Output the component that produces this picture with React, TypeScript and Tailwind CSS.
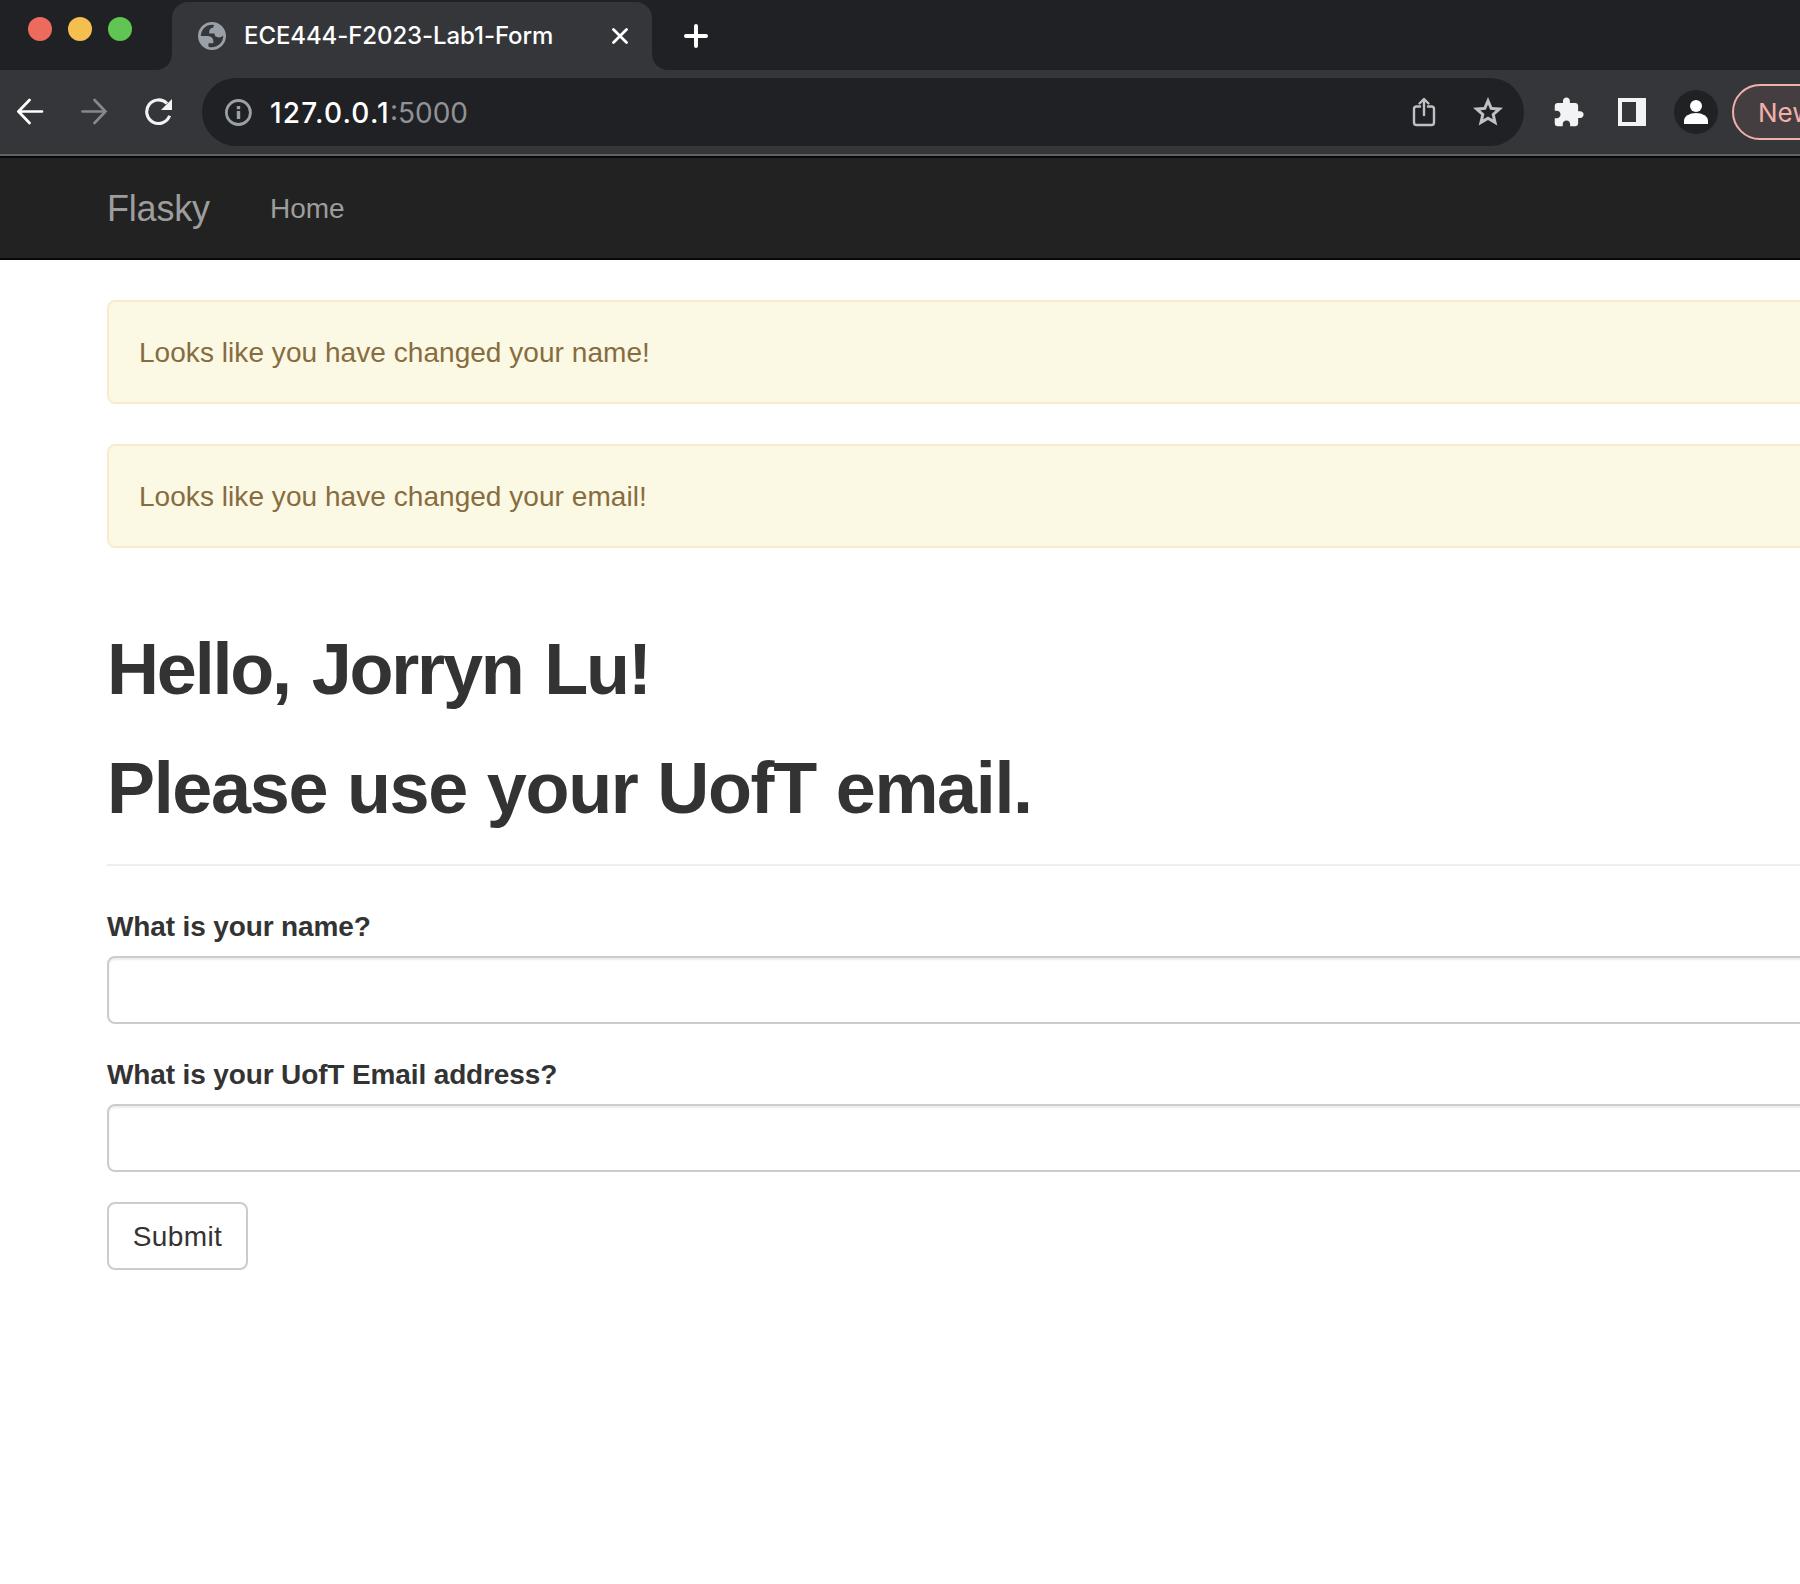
import React from "react";

function TabStrip() {
  return (
    <div className="flex h-[70px] items-start bg-[#202124]">
      <div className="flex w-[156px] gap-4 pt-[17px] pl-7">
        <span className="h-6 w-6 rounded-full bg-[#ed6a5e]" />
        <span className="h-6 w-6 rounded-full bg-[#f5bf4f]" />
        <span className="h-6 w-6 rounded-full bg-[#61c554]" />
      </div>
      <div className="h-4 w-4 self-end bg-[#35363a]">
        <div className="h-4 w-4 rounded-br-2xl bg-[#202124]" />
      </div>
      <div className="mt-0.5 flex h-[68px] w-[480px] items-center rounded-t-2xl bg-[#35363a] pl-[26px]">
        <svg className="h-7 w-7" viewBox="2 2 20 20" fill="#9aa0a6" fillRule="evenodd">
          <path d="M12 2C6.48 2 2 6.48 2 12s4.48 10 10 10 10-4.48 10-10S17.52 2 12 2zM4 12h4.4c3.407.022 4.922 1.73 4.543 5.127H9.488v2.47a8.004 8.004 0 0 0 10.498-8.083C19.327 12.504 18.332 13 17 13c-2.137 0-3.206-.916-3.206-2.75h-3.748c-.274-2.728.683-4.092 2.87-4.092 0-.975.327-1.597.811-1.97A8.004 8.004 0 0 0 4 12z" />
        </svg>
        <span className="ml-[18px] w-[320px] shrink-0 text-[24px] leading-8 font-medium tracking-[-0.09px] whitespace-nowrap text-white">ECE444-F2023-Lab1-Form</span>
        <svg className="ml-12 h-4 w-4 shrink-0" viewBox="0 0 16 16" stroke="#fff" strokeWidth="2.8" strokeLinecap="round">
          <path d="M1.5 1.5l13 13M14.5 1.5l-13 13" />
        </svg>
      </div>
      <div className="h-4 w-4 self-end bg-[#35363a]">
        <div className="h-4 w-4 rounded-bl-2xl bg-[#202124]" />
      </div>
      <svg className="mt-6 ml-4 h-6 w-6" viewBox="0 0 24 24" stroke="#fff" strokeWidth="4" strokeLinecap="round">
        <path d="M2 12h20M12 2v20" />
      </svg>
    </div>
  );
}

function Toolbar() {
  return (
    <div className="flex h-[86px] items-start overflow-hidden border-b-2 border-[#5f6368] bg-[#35363a]">
      <div className="flex h-[84px] w-[202px] shrink-0 items-center gap-9 pl-[17px]">
        <svg className="h-7 w-7" viewBox="0 0 28 28" fill="none" stroke="#fff" strokeWidth="2.7" strokeLinecap="round">
          <path d="M25 13.5H2M12.500 2L1.500 13.500l11 11.500" />
        </svg>
        <svg className="h-7 w-7" viewBox="0 0 28 28" fill="none" stroke="#87888a" strokeWidth="2.7" strokeLinecap="round">
          <path d="M1.500 13.500h23M13.500 2L24.500 13.500 13.500 25" />
        </svg>
        <svg className="h-7 w-7" viewBox="0 0 28 28" fill="none">
          <path d="M24.600 17.800A11.800 11.800 0 1 1 22 5.500" stroke="#f1f3f4" strokeWidth="3.1" />
          <path d="M27 1v11H16z" fill="#f1f3f4" />
        </svg>
      </div>
      <div className="mt-2 flex h-[68px] w-[1322px] shrink-0 items-center rounded-full bg-[#202124] pl-[22px]">
        <svg className="h-7 w-7 shrink-0" viewBox="0 0 28 28">
          <circle cx="14.400" cy="14.500" r="12" fill="none" stroke="#9aa0a6" strokeWidth="2.800" />
          <path d="M12.800 8h3.400v3.200h-3.400zM12.800 13h3.400v8h-3.400z" fill="#9aa0a6" />
        </svg>
        <span className="ml-[18px] flex w-[1142px] shrink-0 pt-px text-[28px] leading-9 whitespace-nowrap text-white">
          <span className="font-medium tracking-[1.2px]">127.0.0.1</span>
          <span className="text-[#919294]">:5000</span>
        </span>
        <svg className="h-[30px] w-6 shrink-0" viewBox="0 0 24 30" fill="none" stroke="#c0c0c2" strokeWidth="2.400" strokeLinecap="round" strokeLinejoin="round">
          <path d="M8 9.500H4.500a2.500 2.500 0 0 0-2.500 2.500v13.500a2.500 2.500 0 0 0 2.500 2.500h15a2.500 2.500 0 0 0 2.500-2.500v-13.500a2.500 2.500 0 0 0-2.500-2.500H16M12 18V2.500M7.500 6.500L12 2l4.500 4.500" />
        </svg>
        <svg className="ml-[34px] h-9 w-9 shrink-0" viewBox="0 0 24 24" fill="#c0c0c2" fillRule="evenodd">
          <path d="M22 9.240l-7.190-.620L12 2 9.190 8.630 2 9.240l5.460 4.730L5.820 21 12 17.270 18.180 21l-1.630-7.030zM12 14.980l-3.200 1.930.850-3.640-2.820-2.450 3.720-.320L12 7.070l1.450 3.430 3.720.320-2.820 2.450.850 3.640z" />
        </svg>
      </div>
      <svg className="mt-[26px] ml-7 h-[33px] w-[33px] shrink-0" viewBox="0 0 24 24" fill="#f1f3f4">
        <path d="M20.500 11H19V7c0-1.100-.900-2-2-2h-4V3.500C13 2.120 11.880 1 10.500 1S8 2.120 8 3.500V5H4c-1.100 0-1.990.900-1.990 2v3.800H3.500c1.490 0 2.700 1.210 2.700 2.700s-1.210 2.700-2.700 2.700H2V20c0 1.100.900 2 2 2h3.800v-1.500c0-1.490 1.210-2.700 2.700-2.700s2.700 1.210 2.700 2.700V22H17c1.100 0 2-.900 2-2v-4h1.500c1.380 0 2.500-1.120 2.500-2.500S21.880 11 20.500 11z" />
      </svg>
      <div className="mt-7 ml-[33px] h-7 w-7 shrink-0 border-y-4 border-r-[10px] border-l-4 border-[#f1f3f4] bg-[#35363a]" />
      <div className="mt-5 ml-7 flex h-11 w-11 shrink-0 flex-col items-center rounded-full bg-[#202124] pt-2.5">
        <span className="h-3 w-3 rounded-full bg-white" />
        <span className="mt-px h-[11px] w-6 rounded-t-[12px_8px] bg-white" />
      </div>
      <div className="mt-3.5 ml-3.5 flex h-14 w-[300px] shrink-0 items-center rounded-full border-2 border-[#f2b0ab] bg-[#443e41] pl-6 text-[26px] whitespace-nowrap text-[#f2b0ab]">
        New
      </div>
    </div>
  );
}

function Field({ label, id }: { label: string; id: string }) {
  return (
    <div className="mb-[30px]">
      <label htmlFor={id} className="mb-[9px] block pt-px text-[28px] leading-10 font-bold tracking-[-0.13px]">
        {label}
      </label>
      <input
        id={id}
        className="block h-[68px] w-full rounded-lg border-2 border-[#ccc] bg-white px-6 shadow-[inset_0_2px_2px_rgba(0,0,0,0.075)] outline-none"
      />
    </div>
  );
}

function Alert({ children }: { children: React.ReactNode }) {
  return (
    <div className="mb-10 h-[104px] rounded-lg border-2 border-[#f8ebcf] bg-[#fbf8e4] px-[30px] pt-[31px] text-[28px] leading-10 tracking-[0.05px] text-[#866d40]">
      {children}
    </div>
  );
}

export default function App() {
  return (
    <div className="h-[1584px] w-[1800px] overflow-hidden bg-white font-['Liberation_Sans',Arial,sans-serif] text-[#333]">
      <header className="font-['Inter',sans-serif]">
        <TabStrip />
        <Toolbar />
      </header>
      <nav className="flex h-[104px] items-center border-y-2 border-[#080808] bg-[#222] pt-0.5 pl-[107px] text-[#9d9d9d]">
        <span className="w-[163px] text-[36px] leading-10 tracking-[-0.2px]">Flasky</span>
        <span className="text-[28px] leading-10">Home</span>
      </nav>
      <main className="ml-[107px] w-[2280px] pt-10">
        <Alert>Looks like you have changed your name!</Alert>
        <Alert>Looks like you have changed your email!</Alert>
        <div className="mt-20 mb-10 border-b-2 border-[#eee] pt-0.5 pb-9">
          <h1 className="text-[72px] leading-[79px] font-bold tracking-[-2.2px] [word-spacing:4px]">Hello, Jorryn Lu!</h1>
          <h1 className="mt-10 text-[72px] leading-[79px] font-bold tracking-[-1.35px] [word-spacing:1.2px]">Please use your UofT email.</h1>
        </div>
        <form>
          <Field label="What is your name?" id="name" />
          <Field label="What is your UofT Email address?" id="email" />
          <button type="button" className="h-[68px] w-[141px] rounded-lg border-2 border-[#ccc] bg-white pt-0.5 text-[28px] leading-10 tracking-[0.4px]">
            Submit
          </button>
        </form>
      </main>
    </div>
  );
}
